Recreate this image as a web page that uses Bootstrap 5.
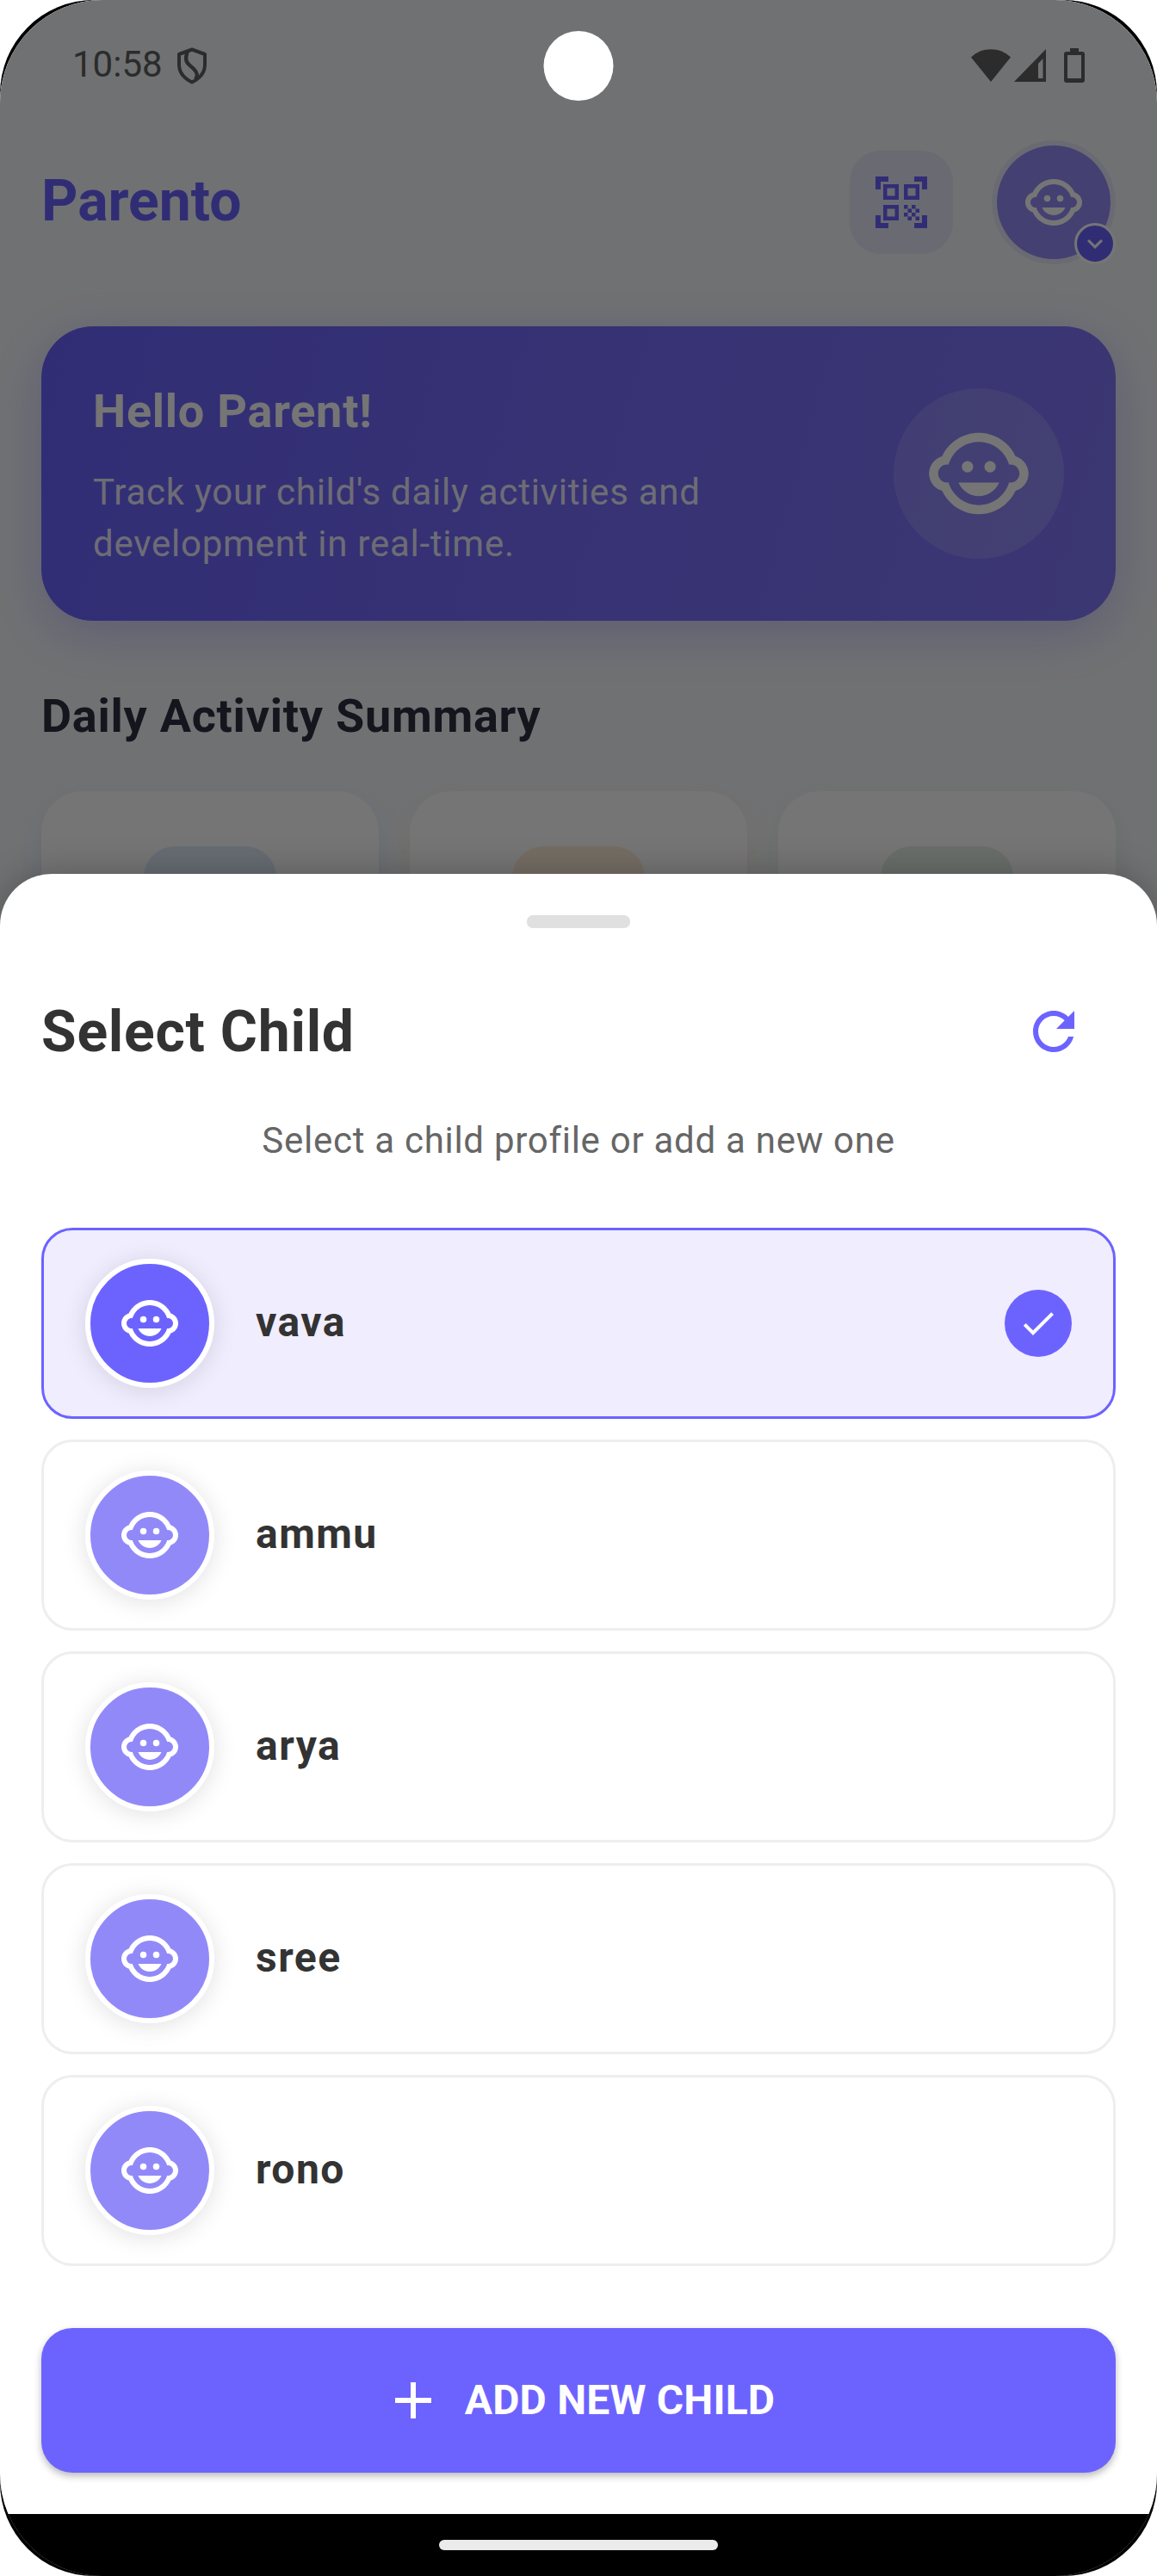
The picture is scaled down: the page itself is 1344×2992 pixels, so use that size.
<!DOCTYPE html>
<html lang="en">
<head>
<meta charset="utf-8">
<meta name="viewport" content="width=device-width, initial-scale=1">
<title>Parento</title>
<link href="https://cdn.jsdelivr.net/npm/bootstrap@5.3.0/dist/css/bootstrap.min.css" rel="stylesheet">
<style>
  :root { --brand: #6c63ff; }
  body { font-family: Roboto, "Liberation Sans", sans-serif; background: #fff; line-height: 1.2; }
  .ico { display: block; fill: currentColor; flex: none; }
  .ico-72 { width: 72px; height: 72px; }
  .device { width: 1344px; height: 2992px; background: #000; border-radius: 109px; }
  .screen { border-radius: 119px; background: #fff; }
  .home { height: 1100px; background: #f5f7fa; }
  .scrim { background: rgba(0,0,0,.54); }
  .status-bar { height: 151px; padding: 0 84px 0 84px; color: #5e605f; }
  .clock { font-size: 42px; }
  .camera { width: 81px; height: 81px; top: 36px; z-index: 5; }
  .app-bar { height: 168px; padding: 0 48px; }
  .brand-name { font-size: 66px; font-weight: 700; color: var(--brand); padding-bottom: 3px; }
  .scan-btn { width: 120px; height: 120px; border-radius: 36px; background: rgba(108,99,255,.1); color: var(--brand); margin-right: 45px; }
  .profile { width: 144px; height: 144px; border: 6px solid rgba(108,99,255,.1); background: #958df9 padding-box; color: #fff; }
  .profile-badge { width: 48px; height: 48px; right: -6px; bottom: -6px; border: 3px solid #fff; background: var(--brand); }
  .hero { margin: 60px 48px 0; height: 342px; padding: 0 60px; border-radius: 60px; color: #fff;
    background: linear-gradient(105deg, #6c63ff, #8279fa); box-shadow: 0 15px 60px rgba(108,99,255,.3); }
  .hero-text { padding-top: 8px; }
  .hero h2 { font-size: 54px; font-weight: 700; line-height: 63px; letter-spacing: .75px; margin: 0 0 33px; }
  .hero p { font-size: 42px; line-height: 60px; letter-spacing: .75px; margin: 0; color: rgba(255,255,255,.9); }
  .hero-icon { width: 198px; height: 198px; background: rgba(255,255,255,.15); }
  .section-title { font-size: 54px; font-weight: 700; line-height: 63px; letter-spacing: .75px; color: #2d3142; margin: 79px 48px 56px; }
  .summary { gap: 36px; padding: 0 48px; }
  .summary-card { height: 300px; border-radius: 48px; background: #fff; padding-top: 64px; }
  .summary-tile { width: 154px; height: 154px; border-radius: 36px; }
  .sheet { top: 1015px; height: 1905px; border-radius: 60px 60px 0 0; padding: 48px; background: #fff; box-shadow: 0 0 40px rgba(0,0,0,.25); }
  .grabber { width: 120px; height: 15px; border-radius: 7px; background: #e0e0e0; margin-bottom: 72px; }
  .sheet-title { font-size: 66px; font-weight: 700; color: #333; letter-spacing: .75px; padding-top: 2px; }
  .refresh { padding: 12px 36px; color: var(--brand); }
  .sheet-sub { font-size: 42px; line-height: 50px; letter-spacing: .72px; color: #666; margin: 54px 0 76px; }
  .child-list { gap: 24px; }
  .child-row { height: 222px; border: 3px solid #eee; border-radius: 36px; padding: 0 48px; background: #fff; }
  .child-row.selected { border-color: var(--brand); background: #f0edff; }
  .child-face { width: 150px; height: 150px; border: 6px solid #fff; background: #9289f9; color: #fff; box-shadow: 0 3px 28px rgba(0,0,0,.12); margin-right: 48px; }
  .selected .child-face { background: var(--brand); }
  .child-name { font-size: 48px; font-weight: 700; letter-spacing: 1.5px; color: #333; padding-bottom: 3px; }
  .tick { width: 78px; height: 78px; background: var(--brand); color: #fff; }
  .add-btn { height: 168px; margin-top: 72px; border: 0; border-radius: 36px; background: var(--brand); color: #fff; font-size: 48px; font-weight: 700; letter-spacing: .2px; box-shadow: 0 4px 8px rgba(0,0,0,.28); gap: 24px; }
  .nav-area { height: 72px; top: 2920px; background: #000; }
  .nav-pill { width: 324px; height: 12px; border-radius: 6px; background: #ebebeb; }
</style>
</head>
<body>
<svg class="d-none" xmlns="http://www.w3.org/2000/svg">
  <symbol id="face" viewBox="0 0 24 24">
    <circle cx="14.5" cy="10.5" r="1.25"/><circle cx="9.5" cy="10.5" r="1.25"/>
    <path d="M22.94 12.66c.04-.21.06-.43.06-.66s-.02-.45-.06-.66c-.25-1.51-1.36-2.74-2.81-3.17-.53-1.12-1.28-2.1-2.19-2.91C16.36 3.85 14.28 3 12 3s-4.36.85-5.94 2.26c-.92.81-1.67 1.8-2.19 2.91-1.45.43-2.56 1.65-2.81 3.17-.04.21-.06.43-.06.66s.02.45.06.66c.25 1.51 1.36 2.74 2.81 3.17.52 1.11 1.27 2.09 2.17 2.89C7.62 20.14 9.71 21 12 21s4.38-.86 5.97-2.28c.9-.8 1.65-1.79 2.17-2.89 1.44-.43 2.55-1.65 2.8-3.17zM19 14c-.1 0-.19-.02-.29-.03-.2.67-.49 1.29-.86 1.86C16.6 17.74 14.45 19 12 19s-4.6-1.26-5.85-3.17c-.37-.57-.66-1.19-.86-1.86-.1.01-.19.03-.29.03-1.1 0-2-.9-2-2s.9-2 2-2c.1 0 .19.02.29.03.2-.67.49-1.29.86-1.86C7.4 6.26 9.55 5 12 5s4.6 1.26 5.85 3.17c.37.57.66 1.19.86 1.86.1-.01.19-.03.29-.03 1.1 0 2 .9 2 2s-.9 2-2 2zM7.5 14c.76 1.77 2.49 3 4.5 3s3.74-1.23 4.5-3h-9z"/>
  </symbol>
</svg>
<div class="device position-relative overflow-hidden">
  <div class="screen position-relative overflow-hidden h-100">
    <main class="home">
      <div class="status-bar d-flex align-items-center">
        <span class="clock">10:58</span>
        <svg class="ico ms-3" width="36" height="44" viewBox="0 0 36 44" fill="none"><path d="M18 3.5 33 9v12c0 9-6 16-15 20.500C9 37 3 30 3 21V9Z" fill="none" stroke="currentColor" stroke-width="4" stroke-linejoin="round"/><path d="M13 5C8 19 14 20 20 26c5 5 5 8 2 12" fill="none" stroke="currentColor" stroke-width="4.500"/></svg>
        <div class="d-flex ms-auto align-items-center">
          <svg class="ico" width="46" height="40" viewBox="0 0 46 40"><path d="M0 10.500C12-2 34-2 46 10.500L23 39Z"/></svg>
          <svg class="ico ms-1" width="38" height="40" viewBox="0 0 38 40"><path fill-rule="evenodd" d="M37 1v38H0ZM33.500 12 28 18v17h5.500Z"/></svg>
          <svg class="ico" style="margin-left:20px" width="24" height="40" viewBox="0 0 24 40"><path fill-rule="evenodd" d="M7 0h10v4h4q3 0 3 3v30q0 3-3 3H3q-3 0-3-3V7q0-3 3-3h4ZM4 8v27h16V8Z"/></svg>
        </div>
      </div>
      <header class="app-bar d-flex align-items-center">
        <span class="brand-name me-auto">Parento</span>
        <div class="scan-btn d-flex align-items-center justify-content-center">
          <svg class="ico ico-72" viewBox="0 0 24 24"><path d="M9.500 6.500v3h-3v-3h3M11 5H5v6h6V5zm-1.500 9.500v3h-3v-3h3M11 13H5v6h6v-6zm6.500-6.500v3h-3v-3h3M19 5h-6v6h6V5zm-6 8h1.500v1.500H13V13zm1.500 1.500H16V16h-1.500v-1.500zM16 13h1.500v1.500H16V13zm-3 3h1.500v1.500H13V16zm1.500 1.500H16V19h-1.500v-1.500zM16 16h1.500v1.500H16V16zm1.500-1.500H19V16h-1.500v-1.500zm0 3H19V19h-1.500v-1.500zM22 7h-2V4h-3V2h5v5zm0 15v-5h-2v3h-3v2h5zM2 22h5v-2H4v-3H2v5zM2 2v5h2V4h3V2H2z"/></svg>
        </div>
        <div class="profile rounded-circle position-relative d-flex align-items-center justify-content-center">
          <svg class="ico ico-72"><use href="#face"/></svg>
          <span class="profile-badge rounded-circle position-absolute d-flex align-items-center justify-content-center">
            <svg class="ico" width="36" height="36" viewBox="0 0 24 24"><path d="M7.410 8.590 12 13.170l4.590-4.580L18 10l-6 6-6-6z"/></svg>
          </span>
        </div>
      </header>
      <section class="hero d-flex align-items-center justify-content-between">
        <div class="hero-text"><h2>Hello Parent!</h2><p>Track your child's daily activities and<br>development in real-time.</p></div>
        <div class="hero-icon rounded-circle d-flex align-items-center justify-content-center"><svg class="ico" width="126" height="126"><use href="#face"/></svg></div>
      </section>
      <h3 class="section-title">Daily Activity Summary</h3>
      <div class="summary d-flex">
        <div class="summary-card flex-fill" style="box-shadow:0 12px 36px rgba(33,120,243,.1)"><div class="summary-tile mx-auto" style="background:#dfebfa"></div></div>
        <div class="summary-card flex-fill" style="box-shadow:0 12px 36px rgba(255,152,0,.1)"><div class="summary-tile mx-auto" style="background:#ffeed9"></div></div>
        <div class="summary-card flex-fill" style="box-shadow:0 12px 36px rgba(76,175,80,.1)"><div class="summary-tile mx-auto" style="background:#e4f0e6"></div></div>
      </div>
    </main>
    <div class="scrim position-absolute top-0 start-0 w-100 h-100"></div>
    <section class="sheet position-absolute start-0 w-100">
      <div class="grabber mx-auto"></div>
      <div class="d-flex align-items-center justify-content-between">
        <span class="sheet-title">Select Child</span>
        <span class="refresh"><svg class="ico ico-72" viewBox="0 0 24 24"><path d="M17.650 6.350C16.200 4.900 14.210 4 12 4c-4.420 0-7.990 3.580-7.990 8s3.570 8 7.990 8c3.730 0 6.840-2.550 7.730-6h-2.080c-.82 2.330-3.040 4-5.650 4-3.310 0-6-2.690-6-6s2.690-6 6-6c1.660 0 3.140.69 4.220 1.780L13 11h7V4l-2.350 2.350z"/></svg></span>
      </div>
      <p class="sheet-sub text-center">Select a child profile or add a new one</p>
      <div class="child-list d-flex flex-column">
        <div class="child-row selected d-flex align-items-center">
          <span class="child-face rounded-circle d-flex align-items-center justify-content-center"><svg class="ico ico-72"><use href="#face"/></svg></span>
          <span class="child-name">vava</span>
          <span class="tick rounded-circle ms-auto d-flex align-items-center justify-content-center"><svg class="ico" width="48" height="48" viewBox="0 0 24 24"><path d="M9 16.170 4.830 12l-1.420 1.410L9 19 21 7l-1.410-1.410z"/></svg></span>
        </div>
        <div class="child-row d-flex align-items-center"><span class="child-face rounded-circle d-flex align-items-center justify-content-center"><svg class="ico ico-72"><use href="#face"/></svg></span><span class="child-name">ammu</span></div>
        <div class="child-row d-flex align-items-center"><span class="child-face rounded-circle d-flex align-items-center justify-content-center"><svg class="ico ico-72"><use href="#face"/></svg></span><span class="child-name">arya</span></div>
        <div class="child-row d-flex align-items-center"><span class="child-face rounded-circle d-flex align-items-center justify-content-center"><svg class="ico ico-72"><use href="#face"/></svg></span><span class="child-name">sree</span></div>
        <div class="child-row d-flex align-items-center"><span class="child-face rounded-circle d-flex align-items-center justify-content-center"><svg class="ico ico-72"><use href="#face"/></svg></span><span class="child-name">rono</span></div>
      </div>
      <button class="add-btn btn w-100 d-flex align-items-center justify-content-center" type="button">
        <svg class="ico ico-72" viewBox="0 0 24 24"><path d="M19 13h-6v6h-2v-6H5v-2h6V5h2v6h6v2z"/></svg>ADD NEW CHILD
      </button>
    </section>
    <div class="nav-area position-absolute start-0 w-100 d-flex align-items-center justify-content-center"><span class="nav-pill"></span></div>
  </div>
  <div class="camera position-absolute start-50 translate-middle-x rounded-circle bg-white"></div>
</div>
<script src="https://cdn.jsdelivr.net/npm/bootstrap@5.3.0/dist/js/bootstrap.bundle.min.js"></script>
</body>
</html>
